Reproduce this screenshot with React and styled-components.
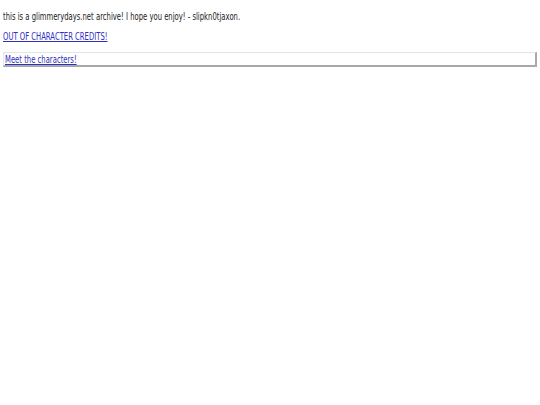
import React from "react";
import styled, { createGlobalStyle } from "styled-components";

const Global = createGlobalStyle`
  html, body { background: #fff; }
  body {
    margin: 0;
    padding: 10px 3px;
    font-family: "DejaVu Sans", Tahoma, sans-serif;
    font-size: 11px;
    color: #222;
  }
`;

const Line = styled.p`
  margin: 0 0 6px 0;
  line-height: 14px;
  white-space: nowrap;
`;

const Narrow = styled.span`
  display: inline-block;
  transform: scaleX(0.622);
  transform-origin: left center;
`;

const Link = styled.a`
  color: #3030c0;
  text-decoration: underline;
`;

const Box = styled.div`
  margin-top: 8px;
  border-top: 1px solid #e4e4e4;
  border-left: 1px solid #e4e4e4;
  border-right: 2px solid #a8a8a8;
  border-bottom: 2px solid #a8a8a8;
  background: #fff;
  padding: 1px 1px 0;
  line-height: 11px;
  white-space: nowrap;
`;

export default function App() {
  return (
    <>
      <Global />
      <Line>
        <Narrow>this is a glimmerydays.net archive! I hope you enjoy! - slipkn0tjaxon.</Narrow>
      </Line>
      <Line>
        <Narrow>
          <Link href="#">OUT OF CHARACTER CREDITS!</Link>
        </Narrow>
      </Line>
      <Box>
        <Narrow>
          <Link href="#">Meet the characters!</Link>
        </Narrow>
      </Box>
    </>
  );
}
